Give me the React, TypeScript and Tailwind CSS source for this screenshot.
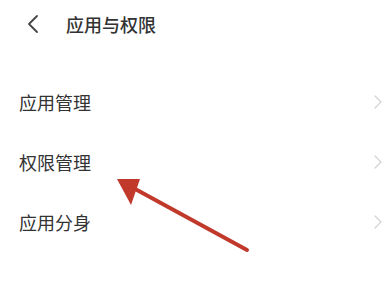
import React from "react";

const Chevron = () => (
  <svg width="8" height="14" viewBox="0 0 8 14" fill="none">
    <path d="M1 1 L7 7 L1 13" stroke="#d4d4d4" strokeWidth="1.3" strokeLinecap="round" strokeLinejoin="round" />
  </svg>
);

const rows = ["应用管理", "权限管理", "应用分身"];

export default function App() {
  return (
    <div
      className="relative w-[389px] h-[286px] bg-white overflow-hidden"
      style={{ fontFamily: '"Noto Sans CJK SC", "Noto Sans", sans-serif' }}
    >
      <div className="flex items-center h-[48px] pl-[27px]">
        <svg width="12" height="20" viewBox="0 0 12 20" fill="none">
          <path d="M10 2 L2 10 L10 18" stroke="#444" strokeWidth="1.8" strokeLinecap="round" strokeLinejoin="round" />
        </svg>
        <span className="ml-[27px] text-[18px] font-medium text-[#333] leading-none">应用与权限</span>
      </div>
      <div className="mt-[24px]">
        {rows.map((r) => (
          <div key={r} className="flex items-center justify-between h-[60px] pl-[19px] pr-[7px]">
            <span className="text-[18px] text-[#333] leading-none">{r}</span>
            <Chevron />
          </div>
        ))}
      </div>
      <svg className="absolute left-0 top-0" width="389" height="286" viewBox="0 0 389 286">
        <line x1="247" y1="250" x2="126" y2="184" stroke="#c0392b" strokeWidth="4" strokeLinecap="round" />
        <polygon points="117,179 140,179 131,205" fill="#c0392b" />
      </svg>
    </div>
  );
}
